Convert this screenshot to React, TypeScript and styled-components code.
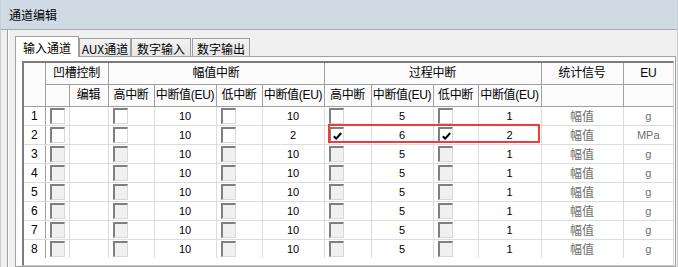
import React from 'react';
import styled, { createGlobalStyle } from 'styled-components';

const GlobalStyle = createGlobalStyle`
  html, body {
    margin: 0;
    padding: 0;
    background: #f0f0f0;
    overflow: hidden;
  }
  * { box-sizing: border-box; }
`;

type Row = {
  id: number;
  enabled: boolean;
  ampHigh: string;
  ampLow: string;
  procHigh: string;
  procLow: string;
  procHighOn?: boolean;
  procLowOn?: boolean;
  unit: string;
};

const rows: Row[] = [1, 2, 3, 4, 5, 6, 7, 8].map((id) =>
  id === 2
    ? { id, enabled: true, ampHigh: '10', ampLow: '2', procHigh: '6', procLow: '2', procHighOn: true, procLowOn: true, unit: 'MPa' }
    : { id, enabled: id === 1, ampHigh: '10', ampLow: '10', procHigh: '5', procLow: '1', unit: 'g' }
);

const colWidths = [21, 24, 39, 46, 62, 46, 62, 47, 62, 45, 63, 82, 50];
const tabs = ['输入通道', 'AUX通道', '数字输入', '数字输出'];

function Check({ on, disabled }: { on?: boolean; disabled?: boolean }) {
  return (
    <Box $disabled={disabled}>
      {on && (
        <svg width="9" height="8" viewBox="0 0 9 8">
          <path d="M0.8 4.2 L3.2 6.6 L8.2 1" fill="none" stroke="#000" strokeWidth="2" />
        </svg>
      )}
    </Box>
  );
}

export default function App() {
  return (
    <Window>
      <GlobalStyle />
      <TitleBar>通道编辑</TitleBar>
      <Body>
        <TabStrip>
          {tabs.map((t, i) => (
            <Tab key={t} $active={i === 0} $w={[64, 52, 60, 58][i]} $gap={i === 3 ? 1 : 0}>
              {t}
            </Tab>
          ))}
        </TabStrip>
        <TabPage>
          <Grid>
            <Table>
              <colgroup>
                {colWidths.map((w, i) => (
                  <col key={i} style={{ width: w }} />
                ))}
              </colgroup>
              <thead>
                <tr style={{ height: 21 }}>
                  <Head rowSpan={2} />
                  <Head colSpan={2}>凹槽控制</Head>
                  <Head colSpan={4}>幅值中断</Head>
                  <Head colSpan={4}>过程中断</Head>
                  <Head>统计信号</Head>
                  <Head>EU</Head>
                </tr>
                <tr style={{ height: 22 }}>
                  <Head />
                  <Head>编辑</Head>
                  <Head>高中断</Head>
                  <Head>中断值(EU)</Head>
                  <Head>低中断</Head>
                  <Head>中断值(EU)</Head>
                  <Head>高中断</Head>
                  <Head>中断值(EU)</Head>
                  <Head>低中断</Head>
                  <Head>中断值(EU)</Head>
                  <Head />
                  <Head />
                </tr>
              </thead>
              <tbody>
                {rows.map((r) => (
                  <DataRow key={r.id}>
                    <NumCell>{r.id}</NumCell>
                    <BoxCell><Check disabled={!r.enabled} /></BoxCell>
                    <Cell />
                    <BoxCell><Check disabled={!r.enabled} /></BoxCell>
                    <Cell>{r.ampHigh}</Cell>
                    <BoxCell><Check disabled={!r.enabled} /></BoxCell>
                    <Cell>{r.ampLow}</Cell>
                    <BoxCell><Check disabled={!r.enabled} on={r.procHighOn} /></BoxCell>
                    <Cell>{r.procHigh}</Cell>
                    <BoxCell><Check disabled={!r.enabled} on={r.procLowOn} /></BoxCell>
                    <Cell>{r.procLow}</Cell>
                    <Cell $muted $cjk>幅值</Cell>
                    <Cell $muted>{r.unit}</Cell>
                  </DataRow>
                ))}
              </tbody>
            </Table>
            <Highlight />
          </Grid>
        </TabPage>
      </Body>
    </Window>
  );
}

const Window = styled.div`
  width: 678px;
  height: 267px;
  overflow: hidden;
  background: #f0f0f0;
  border-left: 1px solid #c9cfd6;
  border-right: 1px solid #c9cfd6;
  display: flex;
  flex-direction: column;
  font-family: "Noto Sans CJK SC", sans-serif;
  color: #000;
`;

const TitleBar = styled.div`
  height: 30px;
  flex-shrink: 0;
  display: flex;
  align-items: center;
  padding: 0 0 1px 8px;
  background: #cfdae5;
  border-bottom: 1px solid #a3a9b0;
  font-size: 12px;
`;

const Body = styled.div`
  flex: 1;
  margin-left: 6px;
  border-left: 1px solid #a0a0a0;
  box-shadow: inset 1px 0 0 #ffffff;
  padding: 6px 0 0 7px;
  display: flex;
  flex-direction: column;
`;

const TabStrip = styled.div`
  display: flex;
  align-items: flex-end;
  height: 21px;
  position: relative;
  z-index: 1;
  margin-bottom: -1px;
`;

const Tab = styled.div<{ $active: boolean; $w: number; $gap: number }>`
  width: ${(p) => p.$w}px;
  margin-left: ${(p) => p.$gap}px;
  height: ${(p) => (p.$active ? 21 : 18)}px;
  margin-bottom: ${(p) => (p.$active ? 0 : 1)}px;
  display: flex;
  align-items: center;
  justify-content: center;
  padding-top: ${(p) => (p.$active ? 0 : 2)}px;
  border: 1px solid #a0a0a0;
  border-bottom: none;
  background: ${(p) => (p.$active ? '#ffffff' : 'linear-gradient(#f3f3f3, #e6e6e6)')};
  font-size: 12px;
  white-space: nowrap;
`;

const TabPage = styled.div`
  width: 661px;
  flex: 1;
  background: #ffffff;
  border: 1px solid #a0a0a0;
  padding: 4px 0 0 6px;
`;

const Grid = styled.div`
  position: relative;
  width: 652px;
  height: 205px;
  background: #ffffff;
  border-top: 2px solid #7c7c7c;
  border-left: 2px solid #7c7c7c;
  border-right: 1px solid #d4d4d4;
  border-bottom: 1px solid #c8c8c8;
`;

const Table = styled.table`
  table-layout: fixed;
  width: 649px;
  border-collapse: collapse;
  border-style: hidden;
`;

const Head = styled.th`
  padding: 0;
  font-weight: normal;
  font-size: 12px;
  line-height: 16px;
  letter-spacing: -0.3px;
  white-space: nowrap;
  overflow: hidden;
  text-align: center;
  background: #fbfbfb;
  border: 1px solid #a0a0a0;
  font-family: "Liberation Sans", "Noto Sans CJK SC", sans-serif;
`;

const DataRow = styled.tr`
  height: 19px;
`;

const Cell = styled.td<{ $muted?: boolean; $cjk?: boolean }>`
  padding: 0;
  text-align: center;
  vertical-align: middle;
  border: 1px solid #dcdcdc;
  font-family: ${(p) => (p.$cjk ? '"Noto Sans CJK SC", sans-serif' : '"Liberation Sans", sans-serif')};
  font-size: ${(p) => (p.$cjk ? 12 : 11)}px;
  line-height: 16px;
  color: ${(p) => (p.$muted ? '#6f6f6f' : '#000')};
`;

const NumCell = styled(Cell)`
  font-size: 12px;
  border-right-color: #a0a0a0;
`;

const BoxCell = styled.td`
  padding: 0;
  vertical-align: top;
  border: 1px solid #dcdcdc;
`;

const Box = styled.span<{ $disabled?: boolean }>`
  display: flex;
  align-items: flex-start;
  justify-content: flex-start;
  width: 15px;
  height: 16px;
  margin: 1px 0 0 4px;
  padding: 3px 0 0 2px;
  background: ${(p) => (p.$disabled ? '#f0f0f0' : '#ffffff')};
  border-top: 2px solid #7f7f7f;
  border-left: 2px solid #7f7f7f;
  border-right: 1px solid #d8d8d8;
  border-bottom: 1px solid #d8d8d8;
`;

const Highlight = styled.div`
  position: absolute;
  left: 304px;
  top: 61px;
  width: 212px;
  height: 19px;
  border: 2px solid #ee3b3b;
  pointer-events: none;
`;
